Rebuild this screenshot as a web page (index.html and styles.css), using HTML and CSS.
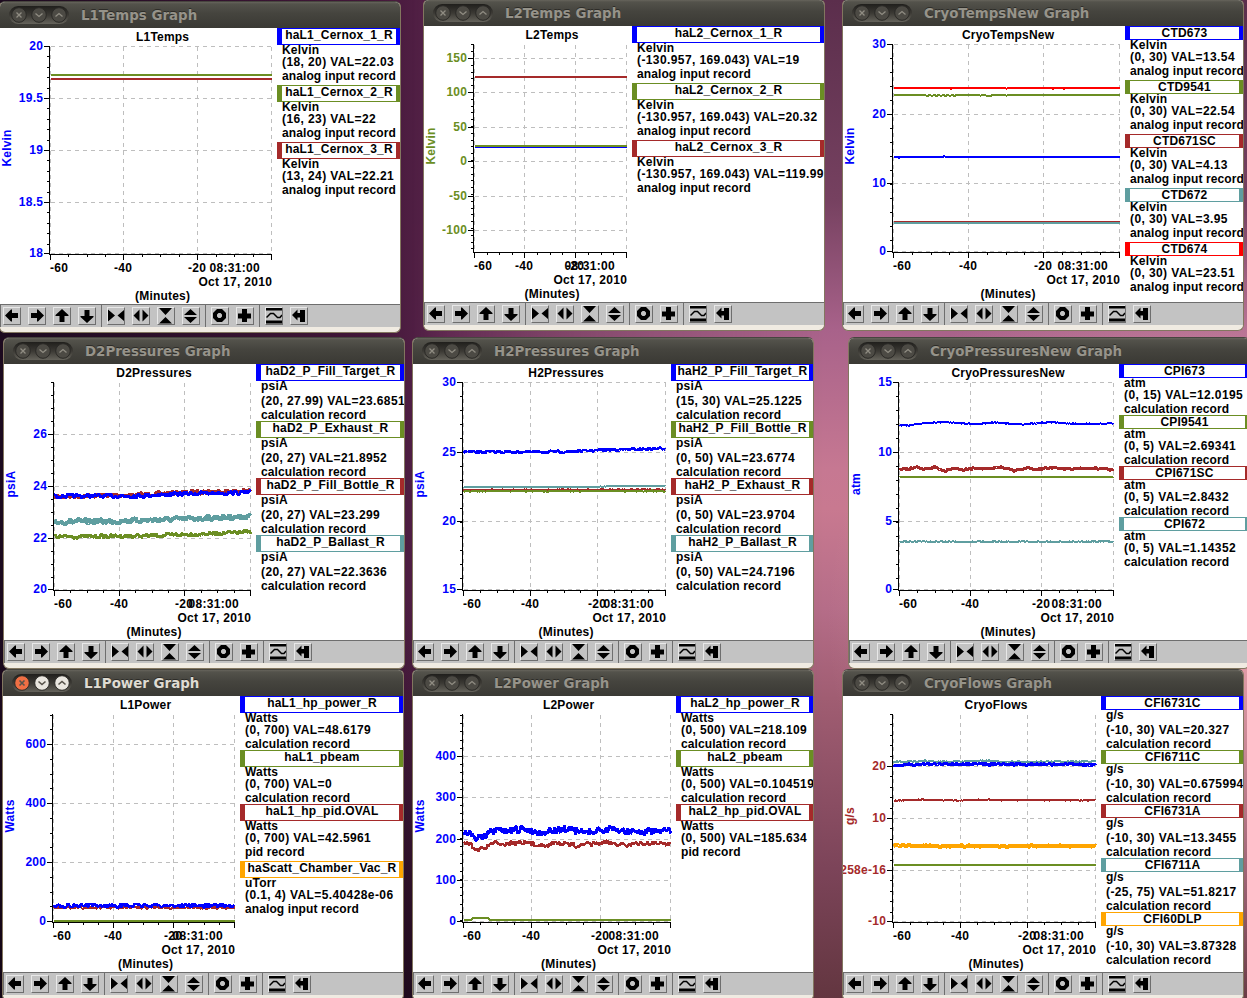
FILE: index.html
```html
<!DOCTYPE html>
<html lang="en">
<head>
<meta charset="utf-8">
<title>StripTool Graphs</title>
<link rel="stylesheet" href="styles.css">
</head>
<body>
<svg class="defs" width="0" height="0" aria-hidden="true">
  <symbol id="i-left" viewBox="0 0 16 16"><path d="M1 7.5 7 1.5h1V5h6v5H8v3.500H7z"/></symbol>
  <symbol id="i-right" viewBox="0 0 16 16"><path d="M15 7.500 9 1.500H8V5H2v5h6v3.500h1z"/></symbol>
  <symbol id="i-up" viewBox="0 0 16 16"><path d="M8 1 14.500 7v1H10.500v6H5.500V8H1.500V7z"/></symbol>
  <symbol id="i-down" viewBox="0 0 16 16"><path d="M8 15 14.500 9V8H10.500V2H5.500v6H1.500v1z"/></symbol>
  <symbol id="i-hin" viewBox="0 0 16 16"><path d="M0 1.500 7 7.500 0 13.500zM16.500 1.500 9.500 7.500l7 6z"/></symbol>
  <symbol id="i-hout" viewBox="0 0 16 16"><path d="M6.500 1.500 .5 7.500l6 6zM9.500 1.500l6 6-6 6z"/></symbol>
  <symbol id="i-vin" viewBox="0 0 16 16"><path d="M1 0h13L7.500 7zM1 15.500h13L7.500 9z"/></symbol>
  <symbol id="i-vout" viewBox="0 0 16 16"><path d="M1 7h13L7.500 1zM1 9h13L7.500 15z"/></symbol>
  <symbol id="i-ring" viewBox="0 0 16 16"><path fill-rule="evenodd" d="M5 1h5l4 4v5l-4 4H5l-4-4V5zM6.500 5 5 6.500v2L6.500 10h2L10 8.500v-2L8.500 5z"/></symbol>
  <symbol id="i-plus" viewBox="0 0 16 16"><path d="M5 1h5v4.500h4v5h-4V14H5v-3.500H1v-5h4z"/></symbol>
  <symbol id="i-wave" viewBox="0 0 16 16"><path d="M0 0h16v2.500H0zM0 12.500h16v3H0z"/><path class="wave" d="M.5 9.500 4.500 5.500h3l4 4h2.500l2-2.500"/></symbol>
  <symbol id="i-back" viewBox="0 0 16 16"><path d="M1 7 6.500 1.500V5H9V2h5v12H9V9.500H6.500v3z"/></symbol>
</svg>
<main id="desktop" class="desktop"></main>
<script src="app.js"></script>
</body>
</html>
```
FILE: styles.css
```css
body {
  margin: 0;
  width: 1247px;
  height: 998px;
  overflow: hidden;
  font-family: "Liberation Sans", sans-serif;
}
.defs { position: absolute; }

.desktop {
  position: relative;
  width: 1247px;
  height: 998px;
  overflow: hidden;
  background:
    linear-gradient(180deg, transparent 60%, rgba(16, 4, 16, .75) 100%),
    linear-gradient(90deg, #1c0a1e 0%, #431739 30%, #5a254c 36%, #6d3a58 52%, #80405f 100%);
}
.desktop::before {
  content: "";
  position: absolute;
  inset: 0;
  background: linear-gradient(180deg, #5b2e4c 0%, #764160 20%, #a8628a 33%, #c67892 47%, #c87990 51%, #b56d88 61%, #a05d72 70%, #7c4459 87%, #633640 100%);
  -webkit-mask-image: linear-gradient(90deg, transparent 33%, rgba(0, 0, 0, .4) 45%, #000 66%);
  mask-image: linear-gradient(90deg, transparent 33%, rgba(0, 0, 0, .4) 45%, #000 66%);
}
.desktop::after {
  content: "";
  position: absolute;
  inset: 0;
  background: radial-gradient(ellipse 420px 400px at 1247px 620px, rgba(246, 178, 186, .8), transparent);
}

.window {
  position: absolute;
  z-index: 1;
  box-sizing: border-box;
  width: 402px;
  height: 332px;
  border: 1px solid #82765f;
  border-top-color: #47453f;
  border-radius: 6px;
  overflow: hidden;
  background: #f0ebe2;
}
.titlebar {
  display: flex;
  align-items: center;
  gap: 12px;
  height: 26px;
  padding-left: 9px;
  background: linear-gradient(#66645c 0, #53524b 2px, #45443e 45%, #3a3934 100%);
}
.controls {
  display: flex;
  gap: 4px;
  padding: 1px 2px;
  border-radius: 10px;
  background: linear-gradient(#201f1c, #3b3934 50%, #65635b);
}
.controls svg { display: block; width: 16px; height: 16px; }
.knob { fill: #4c4a44; stroke: #2b2a27; }
.mark { fill: none; stroke: #908d83; stroke-width: 1.300; }
.title {
  color: #96938a;
  padding-top: 1px;
  font: bold 13.400px/20px "DejaVu Sans", sans-serif;
  text-shadow: 0 -1px #2d2c28;
}
.active .title { color: #dfdbd2; }
.active .knob { fill: #e9e6df; }
.active .close .knob { fill: #ef6f44; }
.active .mark { stroke: #57534b; stroke-width: 1.600; }

.client { display: flex; height: 276px; background: #fff; }
.chart { flex: none; display: block; height: 276px; }
.chart text { font-size: 12px; font-weight: bold; letter-spacing: .2px; }
.chart .num { letter-spacing: .3px; }
.axis { stroke: #000; fill: none; shape-rendering: crispEdges; }
.grid { stroke: #bebebe; stroke-dasharray: 4 4; fill: none; shape-rendering: crispEdges; }
.trace { fill: none; stroke-linejoin: bevel; shape-rendering: crispEdges; }

.blue { color: #0000ff; }
.olive { color: #6b8e23; }
.brown { color: #a52a2a; }
.cadet { color: #5f9ea0; }
.red { color: #ff0000; }
.orange { color: #ffa500; }

.legend { flex: 1; min-width: 0; overflow: hidden; }
.name {
  box-sizing: border-box;
  height: 17px;
  border: solid currentColor;
  border-width: 1px 4px 1px 5px;
  overflow: hidden;
}
.name.short { height: 14px; }
.name span {
  display: block;
  color: #000;
  text-align: center;
  white-space: nowrap;
}
.name span, .info {
  font-size: 12px;
  font-weight: bold;
  line-height: 12px;
  letter-spacing: .2px;
}
.info { padding-left: 5px; white-space: nowrap; color: #000; }
.info div { height: 14px; }
.info .unit { line-height: 10px; }
.info .flat { height: 11px; }
.info .range { letter-spacing: .4px; }
.info .record { height: 15px; letter-spacing: .1px; }
.info .record.flat { height: 12px; }

.toolbar {
  display: flex;
  box-sizing: border-box;
  height: 23px;
  border-top: 1px solid #6e6e6e;
  background: #c3c3c3;
}
.group {
  display: flex;
  gap: 7px;
  padding: 2px 5px 0 5px;
  border-left: 1px solid #6e6e6e;
}
.group:first-child { padding-left: 2px; }
.tool {
  box-sizing: border-box;
  width: 18px;
  height: 18px;
  border: 1px solid #e8e8e8;
  border-right-color: #6e6e6e;
  border-bottom-color: #6e6e6e;
}
.tool svg { display: block; width: 16px; height: 16px; overflow: visible; }
.wave { fill: none; stroke: #000; stroke-width: 1.500; }
```
FILE: app.js
```js
const PLOT_LEFT = 50.5, PLOT_TOP = 18.5, PLOT_BOTTOM = 225.5;
const CALC = "calculation record", ANALOG = "analog input record";

/* y_: labelled ticks [label, y]; v: vertical grid columns; traces: [color, width, noise, [[t, y], ...]] */
const windows = [
  { x: -1, y: 1, t: "L1Temps", color: "blue", unit: "Kelvin", v: [123, 197, 271], minor: 4,
    y_: [["20", 18.5], ["19.5", 70.5], ["19", 122.5], ["18.5", 174.5], ["18", 225.5]],
    traces: [["brown", 2, 0, [[0, 51], [1, 51]]], ["olive", 2, 0, [[0, 47], [1, 47]]]],
    legend: [["blue", "haL1_Cernox_1_R", "Kelvin", "(18, 20) VAL=22.03", ANALOG], ["olive", "haL1_Cernox_2_R", "Kelvin", "(16, 23) VAL=22", ANALOG], ["brown", "haL1_Cernox_3_R", "Kelvin", "(13, 24) VAL=22.21", ANALOG]] },
  { x: 423, y: -1, t: "L2Temps", color: "olive", unit: "Kelvin", v: [100, 151, 202], minor: 4,
    y_: [["150", 32.5], ["100", 66.5], ["50", 101.5], ["0", 135.5], ["-50", 170.5], ["-100", 204.5]],
    traces: [["brown", 2, 0, [[0, 51], [1, 51]]], ["blue", 1, 0, [[0, 121.5], [1, 121.5]]], ["olive", 2, 0, [[0, 120], [1, 120]]]],
    legend: [["blue", "haL2_Cernox_1_R", "Kelvin", "(-130.957, 169.043) VAL=19", ANALOG], ["olive", "haL2_Cernox_2_R", "Kelvin", "(-130.957, 169.043) VAL=20.32", ANALOG], ["brown", "haL2_Cernox_3_R", "Kelvin", "(-130.957, 169.043) VAL=119.99", ANALOG]] },
  { x: 842, y: -1, t: "CryoTempsNew", color: "blue", unit: "Kelvin", v: [125, 200, 276], minor: 4,
    y_: [["30", 18.5], ["20", 88.5], ["10", 157.5], ["0", 225.5]],
    traces: [["brown", 2, 0, [[0, 196], [1, 196]]], ["cadet", 2, 0, [[0, 197], [1, 197]]], ["blue", 2, 0, [[0, 131], [.02, 131], [.025, 132], [.03, 131], [.22, 131], [.225, 130], [.23, 131], [1, 131]]], ["olive", 2, 0, [[0, 69], [.14, 69], [.15, 70], [.16, 69], [.17, 70], [.18, 69], [.19, 70], [.2, 69], [.21, 70], [.22, 69], [.23, 70], [.24, 69], [.25, 70], [.26, 69], [.27, 70], [.28, 69], [.38, 69], [.385, 70], [.39, 69], [.43, 70], [.435, 69], [.495, 69], [.5, 70], [.505, 69], [1, 69]]], ["red", 2, 0, [[0, 62], [.25, 62], [.255, 63], [.26, 62], [.495, 62], [.5, 63], [.505, 62], [.7, 62], [.705, 63], [.71, 62], [.75, 62], [.755, 63], [.76, 62], [1, 62]]]],
    legend: [["blue", "CTD673", "Kelvin", "(0, 30) VAL=13.54", ANALOG], ["olive", "CTD9541", "Kelvin", "(0, 30) VAL=22.54", ANALOG], ["brown", "CTD671SC", "Kelvin", "(0, 30) VAL=4.13", ANALOG], ["cadet", "CTD672", "Kelvin", "(0, 30) VAL=3.95", ANALOG], ["red", "CTD674", "Kelvin", "(0, 30) VAL=23.51", ANALOG]] },
  { x: 3, y: 337, t: "D2Pressures", color: "blue", unit: "psiA", v: [115, 180, 246], minor: 3,
    y_: [["26", 70.5], ["24", 122.5], ["22", 174.5], ["20", 225.5]],
    traces: [["brown", 3, 2.3, [[0, 132.5], [.4, 131], [.7, 128], [1, 126.700]]], ["blue", 3, 2, [[0, 132], [.4, 132], [.7, 129.5], [1, 128.500]]], ["cadet", 4, 2.8, [[0, 158], [.3, 157], [.6, 155.3], [1, 152.500]]], ["olive", 3, 2, [[0, 172.800], [.5, 171.800], [.8, 169.500], [1, 168]]]],
    legend: [["blue", "haD2_P_Fill_Target_R", "psiA", "(20, 27.99) VAL=23.6851", CALC], ["olive", "haD2_P_Exhaust_R", "psiA", "(20, 27) VAL=21.8952", CALC], ["brown", "haD2_P_Fill_Bottle_R", "psiA", "(20, 27) VAL=23.299", CALC], ["cadet", "haD2_P_Ballast_R", "psiA", "(20, 27) VAL=22.3636", CALC]] },
  { x: 412, y: 337, t: "H2Pressures", color: "blue", unit: "psiA", v: [117, 184, 252], minor: 4,
    y_: [["30", 18.5], ["25", 88.5], ["20", 157.5], ["15", 225.5]],
    traces: [["blue", 2.500, 1.200, [[0, 88], [.5, 87.800], [.7, 86], [1, 84.500]]], ["brown", 2, .6, [[0, 126], [1, 125.500]]], ["olive", 2, .6, [[0, 127.200], [1, 127]]], ["cadet", 2, .3, [[0, 123], [.6, 123], [.75, 122], [1, 122]]]],
    legend: [["blue", "haH2_P_Fill_Target_R", "psiA", "(15, 30) VAL=25.1225", CALC], ["olive", "haH2_P_Fill_Bottle_R", "psiA", "(0, 50) VAL=23.6774", CALC], ["brown", "haH2_P_Exhaust_R", "psiA", "(0, 50) VAL=23.9704", CALC], ["cadet", "haH2_P_Ballast_R", "psiA", "(0, 50) VAL=24.7196", CALC]] },
  { x: 848, y: 337, t: "CryoPressuresNew", color: "blue", unit: "atm", v: [121, 192, 264], minor: 4,
    y_: [["15", 18.5], ["10", 88.5], ["5", 157.5], ["0", 225.5]],
    traces: [["blue", 2, .6, [[0, 61], [.05, 61.3], [.12, 59], [.22, 58], [.35, 60], [.45, 58.500], [.56, 60.3], [.7, 58.200], [.85, 60], [1, 59.600]]],
      ["brown", 3, 1, [[0, 105.3], [.05, 104.700], [.08, 103], [.11, 105], [.17, 103], [.21, 107.500], [.25, 103.700], [.3, 105.700], [.36, 104.3], [.43, 104.700], [.48, 102.700], [.53, 106.700], [.6, 104], [.65, 105.3], [.7, 103.3], [.77, 105.3], [.85, 104.700], [.93, 104.3], [1, 105.700]]],
      ["olive", 2, .4, [[0, 113], [1, 113]]], ["cadet", 2, .7, [[0, 177.600], [1, 177.600]]]],
    legend: [["blue", "CPI673", "atm", "(0, 15) VAL=12.0195", CALC], ["olive", "CPI9541", "atm", "(0, 5) VAL=2.69341", CALC], ["brown", "CPI671SC", "atm", "(0, 5) VAL=2.8432", CALC], ["cadet", "CPI672", "atm", "(0, 5) VAL=1.14352", CALC]] },
  { x: 2, y: 669, t: "L1Power", color: "blue", unit: "Watts", v: [110, 170, 231], minor: 3, active: true,
    y_: [["600", 48.5], ["400", 107.5], ["200", 166.5], ["0", 225.5]],
    traces: [["brown", 2, 1.3, [[0, 211.800], [1, 211.800]]], ["blue", 2.500, 2, [[0, 209.600], [1, 209.600]]], ["olive", 2, 0, [[0, 225], [1, 225]]]],
    legend: [["blue", "haL1_hp_power_R", "Watts", "(0, 700) VAL=48.6179", CALC], ["olive", "haL1_pbeam", "Watts", "(0, 700) VAL=0", CALC], ["brown", "haL1_hp_pid.OVAL", "Watts", "(0, 700) VAL=42.5961", "pid record"], ["orange", "haScatt_Chamber_Vac_R", "uTorr", "(0.1, 4) VAL=5.40428e-06", ANALOG]] },
  { x: 412, y: 669, t: "L2Power", color: "blue", unit: "Watts", v: [118, 187, 257], minor: 4,
    y_: [["400", 60.5], ["300", 101.5], ["200", 143.5], ["100", 184.5], ["0", 225.5]],
    traces: [["brown", 2.500, 2.3, [[0, 147.500], [.035, 148], [.045, 153.500], [.11, 152], [.13, 147.500], [.3, 147], [.37, 149.500], [.45, 147], [.55, 149.500], [.7, 146.500], [.8, 149], [.9, 147], [1, 148]]],
      ["blue", 3, 3.800, [[0, 136], [.035, 136.700], [.045, 141.500], [.11, 141], [.13, 136], [.3, 133.500], [.37, 136.500], [.5, 133], [.57, 136.500], [.7, 133.500], [.85, 136], [1, 135.500]]],
      ["olive", 2, 0, [[0, 224], [.035, 224], [.045, 222], [.12, 222], [.13, 224], [1, 224]]]],
    legend: [["blue", "haL2_hp_power_R", "Watts", "(0, 500) VAL=218.109", CALC], ["olive", "haL2_pbeam", "Watts", "(0, 500) VAL=0.104519", CALC], ["brown", "haL2_hp_pid.OVAL", "Watts", "(0, 500) VAL=185.634", "pid record"]] },
  { x: 842, y: 669, t: "CryoFlows", color: "brown", unit: "g/s", v: [117, 184, 252], minor: 4,
    y_: [["20", 70.5], ["10", 122.5], ["1.00258e-16", 174.5], ["-10", 225.5]],
    traces: [["cadet", 2, .8, [[0, 66.200], [.15, 64.800], [.2, 65.500], [.35, 65.500], [.47, 64.500], [.55, 66], [1, 65.300]]], ["blue", 3, 1.200, [[0, 69.300], [.15, 68], [1, 68.500]]], ["brown", 2, .6, [[0, 104.700], [.15, 103.700], [.3, 104.500], [.4, 103.900], [1, 104.200]]], ["orange", 4, 1, [[0, 150], [1, 150]]], ["olive", 2, 0, [[0, 169], [1, 169]]]],
    legend: [["blue", "CFI6731C", "g/s", "(-10, 30) VAL=20.327", CALC], ["olive", "CFI6711C", "g/s", "(-10, 30) VAL=0.675994", CALC], ["brown", "CFI6731A", "g/s", "(-10, 30) VAL=13.3455", CALC], ["cadet", "CFI6711A", "g/s", "(-25, 75) VAL=51.8217", CALC], ["orange", "CFI60DLP", "g/s", "(-10, 30) VAL=3.87328", CALC]] }
];

let seed = 7;
const rnd = () => ((seed = (seed * 16807) % 2147483647) / 2147483647) * 2 - 1;

function trace([color, width, noise, pts], right) {
  let d = "M";
  if (!noise) {
    d += pts.map(([t, y]) => `${(PLOT_LEFT + t * (right - PLOT_LEFT)).toFixed(1)} ${y}`).join("L");
  } else {
    const out = [];
    for (let x = PLOT_LEFT; x <= right; x++) {
      const t = (x - PLOT_LEFT) / (right - PLOT_LEFT);
      let i = 0;
      while (i < pts.length - 2 && t > pts[i + 1][0]) i++;
      const [t0, y0] = pts[i], [t1, y1] = pts[i + 1];
      out.push(`${x} ${(y0 + (y1 - y0) * (t - t0) / (t1 - t0) + rnd() * noise).toFixed(1)}`);
    }
    d += out.join("L");
  }
  return `<path class="trace ${color}" stroke="currentColor" stroke-width="${width}" d="${d}"/>`;
}

function chart(w) {
  const right = w.v[2] + .5;
  let grid = "", axis = `M49.5 ${PLOT_TOP - .5}V226.5H${right + .5}`;
  for (const x of [50, ...w.v]) grid += `M${x + .5} ${PLOT_TOP}V${PLOT_BOTTOM}`;
  for (const [, y] of w.y_) { grid += `M${PLOT_LEFT} ${y}H${right}`; axis += `M44 ${y}H49`; }
  const step = (w.y_[1][1] - w.y_[0][1]) / (w.minor + 1);
  const count = Math.floor((w.y_[0][1] - 17.5) / step);
  for (let y = w.y_[0][1] - count * step; y < 226; y += step) axis += `M47 ${Math.floor(y) + .5}H49`;
  const xs = [50, ...w.v];
  xs.forEach((x, i) => {
    axis += `M${x + .5} 227V232`;
    if (i < 3) for (let k = 1; k < 4; k++) axis += `M${Math.round(x + (xs[i + 1] - x) * k / 4) + .5} 227V229`;
  });
  const mid = (PLOT_LEFT + right) / 2 + 1.600, end = right - 36.700;
  return `<svg class="chart" width="${w.v[2] + 6}" height="276">
    <path class="grid" d="${grid}"/>${w.traces.map(t => trace(t, right)).join("")}<path class="axis" d="${axis}"/>
    <text x="${mid}" y="13" text-anchor="middle">${w.t}</text>
    ${w.y_.map(([l, y]) => `<text class="num ${w.color}" fill="currentColor" x="43.300" y="${y + 3.500}" text-anchor="end">${l}</text>`).join("")}
    <text class="${w.color}" fill="currentColor" transform="translate(11 120) rotate(-90)" text-anchor="middle">${w.unit}</text>
    <text class="num" x="59" y="244" text-anchor="middle">-60</text>
    <text class="num" x="${w.v[0]}" y="244" text-anchor="middle">-40</text>
    <text class="num" x="${w.v[1]}" y="244" text-anchor="middle">-20</text>
    <text class="num" x="${end}" y="244" text-anchor="middle">08:31:00</text>
    <text class="num" x="${end + .500}" y="258" text-anchor="middle">Oct 17, 2010</text>
    <text x="${mid}" y="272" text-anchor="middle">(Minutes)</text></svg>`;
}

const entry = ([color, name, unit, range, record]) => `
  <div class="name ${color}${name.includes("_") ? "" : " short"}"><span>${name}</span></div>
  <div class="info"><div class="unit${/[pg]/.test(unit) ? "" : " flat"}">${unit}</div><div class="range">${range}</div>
  <div class="record${/[pg]/.test(record) ? "" : " flat"}">${record}</div></div>`;

const knob = (cls, mark) => `<svg class="${cls}" viewBox="0 0 16 16"><circle class="knob" cx="8" cy="8" r="7.300"/><path class="mark" d="${mark}"/></svg>`;
const controls = knob("close", "M5.500 5.500l5 5m0-5l-5 5") + knob("", "M4.500 6.500 8 9.500l3.500-3") + knob("", "M4.500 9.500 8 6.500l3.500 3");
const toolbar = [["left", "right", "up", "down"], ["hin", "hout", "vin", "vout"], ["ring", "plus"], ["wave", "back"]]
  .map(g => `<div class="group">${g.map(i => `<div class="tool"><svg><use href="#i-${i}"/></svg></div>`).join("")}</div>`).join("");

document.getElementById("desktop").innerHTML = windows.map(w => `
  <section class="window${w.active ? " active" : ""}" style="left:${w.x}px;top:${w.y}px">
    <header class="titlebar"><div class="controls">${controls}</div><div class="title">${w.t} Graph</div></header>
    <div class="client">${chart(w)}<div class="legend">${w.legend.map(entry).join("")}</div></div>
    <footer class="toolbar">${toolbar}</footer>
  </section>`).join("");
```
